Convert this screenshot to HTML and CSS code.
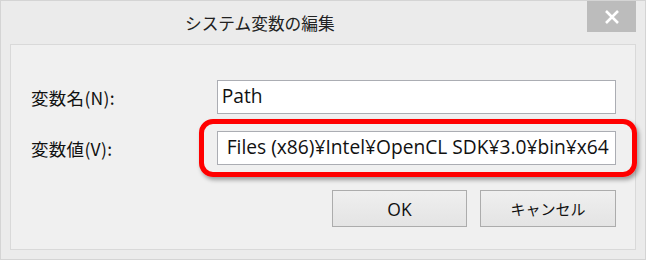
FILE: index.html
```html
<!DOCTYPE html>
<html lang="ja">
<head>
<meta charset="utf-8">
<link rel="stylesheet" href="styles.css">
</head>
<body>
<div class="window">
  <div class="titlebar">
    <div class="title">システム変数の編集</div>
    <div class="close"><svg width="16" height="14" viewBox="0 0 16 14"><path d="M2 1 L14 13 M14 1 L2 13" stroke="#fff" stroke-width="2.6" fill="none"/></svg></div>
  </div>
  <div class="panel">
    <div class="row row-name">
      <label class="label">変数名(N):</label>
      <div class="input">Path</div>
    </div>
    <div class="row row-value">
      <label class="label">変数値(V):</label>
      <div class="input input-value">Files (x86)¥Intel¥OpenCL SDK¥3.0¥bin¥x64<span class="highlight"></span></div>
    </div>
    <div class="buttons">
      <div class="btn">OK</div>
      <div class="btn btn-cancel">キャンセル</div>
    </div>
  </div>
</div>
</body>
</html>
```

FILE: styles.css
```css
html, body {
  margin: 0;
  padding: 0;
  background: #e9e9e9;
}
.window {
  width: 646px;
  height: 260px;
  box-sizing: border-box;
  border: 1px solid #d4d4d4;
  background: #ebebeb;
  display: flex;
  flex-direction: column;
  font-family: "Noto Sans CJK JP", sans-serif;
  overflow: hidden;
}
.titlebar {
  height: 43px;
  position: relative;
  display: flex;
  align-items: flex-start;
}
.title {
  margin-left: 184px;
  margin-top: 9px;
  font-size: 16.7px;
  line-height: 26px;
  color: #222;
  font-weight: 400;
}
.close {
  position: absolute;
  top: 0;
  left: 586px;
  width: 49px;
  height: 31px;
  background: #bcbcbc;
  display: flex;
  align-items: center;
  justify-content: center;
}
.panel {
  margin: 0 9px 9px 9px;
  flex: 1;
  border: 1px solid #d9d9d9;
  background: #f0f0f0;
  padding: 35px 19px 0 20px;
  display: flex;
  flex-direction: column;
}
.row {
  display: flex;
  align-items: center;
  height: 34px;
}
.row-value {
  margin-top: 17px;
}
.label {
  width: 186px;
  font-size: 17.5px;
  letter-spacing: 0.3px;
  color: #111;
}
.input {
  width: 400px;
  height: 34px;
  box-sizing: border-box;
  border: 1px solid #abadb3;
  background: #fff;
  font-family: "Open Sans", "Noto Sans CJK JP", sans-serif;
  font-size: 19.2px;
  line-height: 30px;
  padding-left: 4px;
  color: #111;
  white-space: nowrap;
  position: relative;
}
.input-value {
  padding-left: 9px;
}
.highlight {
  position: absolute;
  left: -19px;
  top: -13px;
  right: -22px;
  bottom: -13px;
  border: 5px solid #ff0000;
  border-radius: 14px;
  box-shadow: 2px 3px 4px rgba(0,0,0,0.35);
}
.buttons {
  display: flex;
  justify-content: flex-end;
  gap: 13px;
  margin-top: 25px;
}
.btn {
  width: 135px;
  height: 37px;
  box-sizing: border-box;
  border: 1px solid #acacac;
  background: linear-gradient(#efefef, #e4e4e4);
  font-family: "Open Sans", "Noto Sans CJK JP", sans-serif;
  font-size: 17.5px;
  display: flex;
  align-items: center;
  justify-content: center;
  color: #111;
}
.btn-cancel {
  width: 136px;
  font-family: "Noto Sans CJK JP", sans-serif;
  font-size: 15px;
}
```
